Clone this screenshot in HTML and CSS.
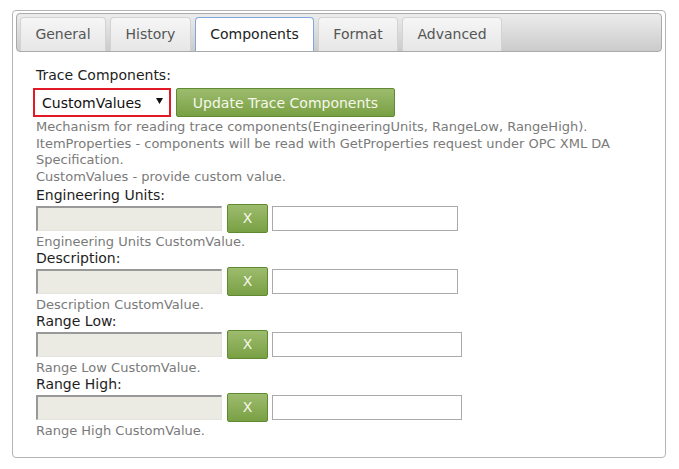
FILE: index.html
```html
<!DOCTYPE html>
<html>
<head>
<meta charset="utf-8">
<link rel="stylesheet" href="styles.css">
</head>
<body>
<div class="panel">
  <div class="tabbar">
    <div class="tab t-general">General</div>
    <div class="tab t-history">History</div>
    <div class="tab active t-components">Components</div>
    <div class="tab t-format">Format</div>
    <div class="tab t-advanced">Advanced</div>
  </div>
  <div class="content">
    <div class="label first">Trace Components:</div>
    <div class="row top-row">
      <div class="select"><span>CustomValues</span><svg class="arrow" width="7" height="6" viewBox="0 0 7 6"><polygon points="0,0 7,0 3.5,6" fill="#111"/></svg></div>
      <div class="btn update">Update Trace Components</div>
    </div>
    <div class="help multi">Mechanism for reading trace components(EngineeringUnits, RangeLow, RangeHigh).<br>ItemProperties - components will be read with GetProperties request under OPC XML DA Specification.<br>CustomValues - provide custom value.</div>

    <div class="label">Engineering Units:</div>
    <div class="row">
      <div class="disabled"></div>
      <div class="btn x">X</div>
      <div class="text"></div>
    </div>
    <div class="help">Engineering Units CustomValue.</div>

    <div class="label">Description:</div>
    <div class="row">
      <div class="disabled"></div>
      <div class="btn x">X</div>
      <div class="text"></div>
    </div>
    <div class="help">Description CustomValue.</div>

    <div class="label">Range Low:</div>
    <div class="row">
      <div class="disabled"></div>
      <div class="btn x">X</div>
      <div class="text wide"></div>
    </div>
    <div class="help">Range Low CustomValue.</div>

    <div class="label">Range High:</div>
    <div class="row">
      <div class="disabled"></div>
      <div class="btn x">X</div>
      <div class="text wide"></div>
    </div>
    <div class="help">Range High CustomValue.</div>
  </div>
</div>
</body>
</html>
```

FILE: styles.css
```css
* { box-sizing: border-box; }
body {
  margin: 0;
  background: #fff;
  font-family: "DejaVu Sans", Verdana, sans-serif;
  color: #222;
}
.panel {
  margin: 10px 0 0 12px;
  width: 654px;
  height: 448px;
  border: 1px solid #b4b4b4;
  border-radius: 4px;
  padding: 2px 3px;
}
.tabbar {
  display: flex;
  gap: 4px;
  height: 39px;
  padding: 4px 0 0 3px;
  border: 1px solid #aaa;
  border-radius: 4px;
  background: linear-gradient(#ececec, #cbcbcb);
  align-items: flex-end;
}
.tab {
  height: 34px;
  line-height: 32px;
  text-align: center;
  font-size: 14px;
  color: #555;
  border: 1px solid #d3d3d3;
  border-bottom: none;
  border-radius: 4px 4px 0 0;
  background: linear-gradient(#f6f6f6, #e6e6e6);
}
.t-general { width: 86px; }
.t-history { width: 81px; }
.t-components { width: 119px; }
.t-format { width: 80px; }
.t-advanced { width: 100px; }
.tab.active {
  background: #fff;
  color: #222;
  border: 1px solid #7fa7de;
  border-bottom: none;
}
.content {
  padding: 15px 0 0 20px;
}
.label {
  font-size: 14px;
  line-height: 17px;
  color: #1e1e1e;
}
.row {
  display: flex;
  align-items: center;
  gap: 5px;
  height: 29px;
}
.top-row { margin-top: 4px; margin-bottom: 2px; }
.select {
  display: flex;
  align-items: center;
  justify-content: space-between;
  width: 138px;
  height: 29px;
  margin-left: -3px;
  padding: 0 6px 0 7px;
  border: 2px solid #e21a28;
  font-size: 14px;
  color: #111;
  background: #fff;
}
.arrow { margin-top: -3px; }
.btn {
  height: 29px;
  display: flex;
  align-items: center;
  justify-content: center;
  font-size: 14px;
  color: #f6f7ea;
  background: linear-gradient(#9dbc6e, #79a044);
  border: 1px solid #5f8a31;
  border-radius: 2px;
}
.update { width: 219px; }
.x { width: 41px; }
.disabled {
  width: 186px;
  height: 25px;
  background: #ebebe4;
  border-top: 2px solid #999;
  border-left: 2px solid #999;
  border-right: 1px solid #e4e4de;
  border-bottom: 1px solid #e4e4de;
}
.text {
  width: 186px;
  height: 25px;
  margin-left: -1px;
  background: #fff;
  border: 1px solid #aaa;
}
.text.wide { width: 190px; }
.help {
  font-size: 13px;
  line-height: 17px;
  color: #7a7a7a;
}
.help.multi {
  line-height: 16.7px;
  margin-bottom: 1px;
}
```
